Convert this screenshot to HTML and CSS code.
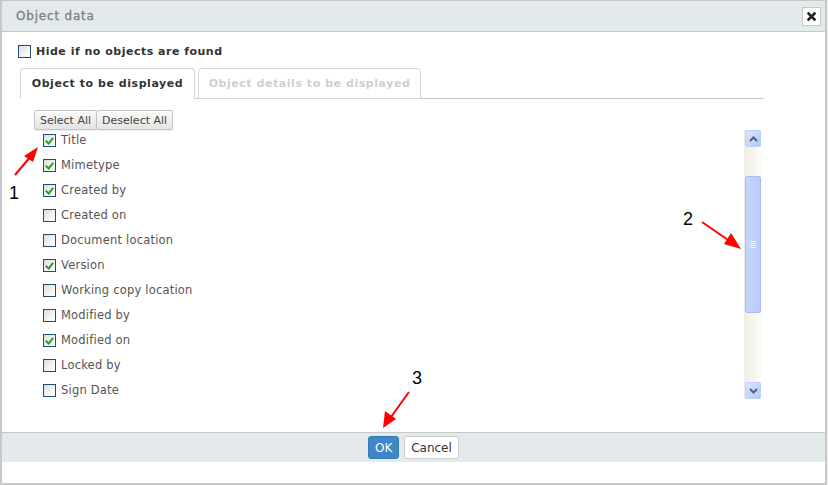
FILE: index.html
```html
<!DOCTYPE html>
<html>
<head>
<meta charset="utf-8">
<link rel="stylesheet" href="styles.css">
</head>
<body>
<div class="dialog">
  <div class="titlebar">
    <span class="title">Object data</span>
    <button class="close" aria-label="Close">
      <svg width="9" height="9" viewBox="0 0 9 9"><path d="M1.5 1.5L7.5 7.5M7.5 1.5L1.5 7.5" stroke="#222" stroke-width="2.6" stroke-linecap="square"/></svg>
    </button>
  </div>
  <div class="body">
    <label class="hide"><span class="cb"></span>Hide if no objects are found</label>
    <div class="tabs">
      <div class="tab active">Object to be displayed</div>
      <div class="tab">Object details to be displayed</div>
    </div>
    <div class="panel">
      <div class="list">
        <div class="btngroup"><button class="sbtn">Select All</button><button class="sbtn">Deselect All</button></div>
        <ul class="items">
          <li><span class="cb on"></span>Title</li>
          <li><span class="cb on"></span>Mimetype</li>
          <li><span class="cb on"></span>Created by</li>
          <li><span class="cb"></span>Created on</li>
          <li><span class="cb"></span>Document location</li>
          <li><span class="cb on"></span>Version</li>
          <li><span class="cb"></span>Working copy location</li>
          <li><span class="cb"></span>Modified by</li>
          <li><span class="cb on"></span>Modified on</li>
          <li><span class="cb"></span>Locked by</li>
          <li><span class="cb"></span>Sign Date</li>
        </ul>
      </div>
      <div class="scrollbar">
        <div class="sb-btn"><svg width="9" height="6" viewBox="0 0 9 6"><path d="M1 5L4.5 1.5L8 5" fill="none" stroke="#4d6185" stroke-width="2"/></svg></div>
        <div class="sb-track top"></div>
        <div class="sb-thumb"><span class="grip"></span></div>
        <div class="sb-track"></div>
        <div class="sb-btn"><svg width="9" height="6" viewBox="0 0 9 6"><path d="M1 1L4.5 4.5L8 1" fill="none" stroke="#4d6185" stroke-width="2"/></svg></div>
      </div>
    </div>
  </div>
  <div class="footer">
    <button class="ok">OK</button>
    <button class="cancel">Cancel</button>
  </div>
  <div class="bottom"></div>
</div>
<svg class="annot" width="828" height="485" viewBox="0 0 828 485">
  <g stroke="#f00" stroke-width="2" fill="#f00">
    <line x1="15" y1="175" x2="31" y2="156"/>
    <path d="M38 147L24 156L33 162Z" stroke="none"/>
    <line x1="702" y1="222" x2="731" y2="242"/>
    <path d="M741 249L724 244L731 233Z" stroke="none"/>
    <line x1="409" y1="392" x2="391" y2="417"/>
    <path d="M383 428L385 411L396 419Z" stroke="none"/>
  </g>
  <g class="num">
    <text x="9" y="199">1</text>
    <text x="683" y="225">2</text>
    <text x="412" y="384">3</text>
  </g>
</svg>
</body>
</html>
```

FILE: styles.css
```css
* { box-sizing: border-box; }
html, body { margin: 0; padding: 0; }
body {
  width: 828px;
  height: 485px;
  background: #f2f2f2;
  font-family: "DejaVu Sans", Verdana, sans-serif;
  position: relative;
  overflow: hidden;
}
.dialog {
  width: 827px;
  height: 485px;
  background: #fff;
  border-top: 1px solid #c8c8c8;
  border-left: 2px solid #c8c8c8;
  border-right: 2px solid #c8c8c8;
  border-bottom: 2px solid #c8c8c8;
  display: flex;
  flex-direction: column;
}
.titlebar {
  height: 31px;
  flex: none;
  background: #e2eaeb;
  border-bottom: 1px solid #c8c8c8;
  display: flex;
  align-items: center;
  justify-content: space-between;
  padding: 0 4px 0 14px;
}
.title {
  font-size: 12px;
  font-weight: normal;
  color: #777;
  letter-spacing: 0.8px;
  -webkit-text-stroke: 0.3px #888;
}
.close {
  width: 19px;
  height: 19px;
  padding: 0;
  margin: 0;
  background: #fff;
  border: 1px solid #c8c8c8;
  display: flex;
  align-items: center;
  justify-content: center;
}
.body {
  height: 400px;
  flex: none;
  padding: 13px 0 0 16px;
}
.cb {
  display: inline-block;
  width: 13px;
  height: 13px;
  flex: none;
  border: 1px solid #1e4d78;
  background: linear-gradient(135deg, #dcdcdc 0%, #f4f4f4 60%, #fff 100%);
  position: relative;
}
.cb.on::after {
  content: "";
  position: absolute;
  left: 3px;
  top: 1px;
  width: 3px;
  height: 6px;
  border-right: 2px solid #22a322;
  border-bottom: 2px solid #22a322;
  transform: rotate(40deg);
}
.hide {
  display: flex;
  align-items: center;
  gap: 5px;
  height: 13px;
  font-size: 11px;
  font-weight: bold;
  color: #333;
  letter-spacing: 0.5px;
}
.tabs {
  margin: 10px 0 0 2px;
  width: 744px;
  height: 31px;
  border-bottom: 1px solid #c8c8c8;
  display: flex;
  gap: 3px;
}
.tab {
  height: 31px;
  border: 1px solid #d4d4d4;
  border-radius: 4px 4px 0 0;
  display: flex;
  align-items: center;
  justify-content: center;
  padding: 0;
  font-size: 11px;
  font-weight: bold;
  color: #cfcfcf;
  letter-spacing: 0.55px;
  background: #fff;
}
.tab.active {
  color: #333;
  border-bottom-color: #fff;
  width: 175px;
}
.tab:not(.active) { width: 223px; }
.panel {
  margin-left: 2px;
  width: 744px;
  display: flex;
  justify-content: space-between;
  padding: 11px 3px 0 14px;
}
.btngroup { display: flex; height: 20px; }
.sbtn {
  height: 20px;
  margin: 0;
  padding: 0 5px;
  font-family: "DejaVu Sans", Verdana, sans-serif;
  font-size: 11px;
  color: #444;
  border: 1px solid #c4c4c4;
  border-radius: 2px;
  background: linear-gradient(#fafafa, #e4e4e4);
  box-shadow: 0 1px 1px rgba(0,0,0,0.08);
}
.sbtn + .sbtn { margin-left: -1px; }
.items {
  list-style: none;
  margin: 0;
  padding: 0 0 0 9px;
}
.items li {
  height: 25px;
  padding-top: 1px;
  padding-bottom: 6px;
  display: flex;
  align-items: center;
  gap: 5px;
  font-size: 11.5px;
  color: #555;
  letter-spacing: 0.2px;
}
.scrollbar {
  margin-top: 20px;
  width: 17px;
  height: 269px;
  display: flex;
  flex-direction: column;
  background: #f4f4ee;
  border-left: 1px solid #eeeeea;
}
.sb-btn {
  height: 17px;
  flex: none;
  background: linear-gradient(135deg, #dde6fc, #b4c8f6);
  border: 1px solid #bcd0fa;
  border-radius: 2px;
  display: flex;
  align-items: center;
  justify-content: center;
}
.sb-track { flex: 1; background: linear-gradient(90deg, #eeede6, #fbfbf8); }
.sb-track.top { flex: none; height: 29px; }
.sb-thumb {
  height: 137px;
  flex: none;
  background: linear-gradient(90deg, #c6d5fb, #b8cbf8);
  border: 1px solid #a6bdf3;
  border-radius: 2px;
  display: flex;
  align-items: center;
  justify-content: center;
}
.grip {
  width: 6px;
  height: 7px;
  background: repeating-linear-gradient(#eef3ff 0 1px, transparent 1px 2px);
}
.footer {
  flex: none;
  height: 30px;
  background: #e2eaeb;
  border-top: 1px solid #c8c8c8;
  display: flex;
  align-items: center;
  justify-content: center;
  gap: 5px;
}
.footer button {
  height: 23px;
  margin: 0;
  font-family: "DejaVu Sans", Verdana, sans-serif;
  font-size: 12px;
  border-radius: 3px;
  padding: 0 6px;
}
.ok {
  width: 31px;
  background: #3f88c8;
  border: 1px solid #3479b6;
  color: #fff;
}
.cancel {
  width: 55px;
  background: #fff;
  border: 1px solid #cccccc;
  color: #333;
}
.bottom { flex: 1; }
.annot {
  position: absolute;
  left: 0;
  top: 0;
  pointer-events: none;
}
.num text {
  font-family: "Liberation Sans", Arial, sans-serif;
  font-size: 18px;
  fill: #000;
}
```
